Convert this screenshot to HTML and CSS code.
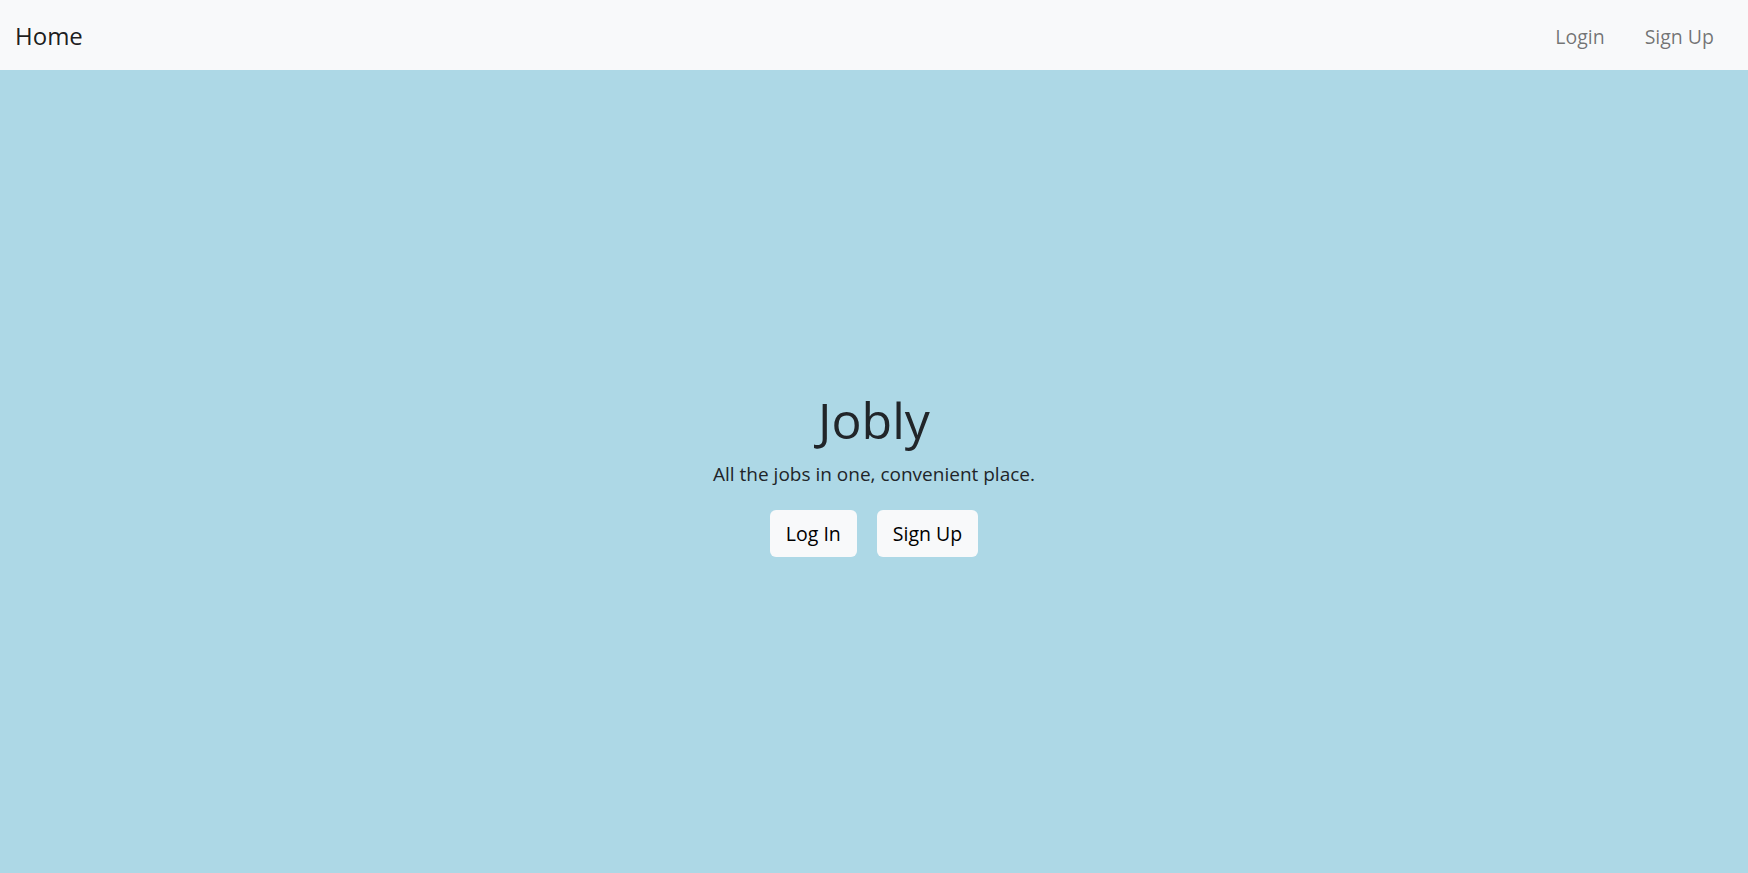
FILE: index.html
```html
<!DOCTYPE html>
<html lang="en">
<head>
<meta charset="utf-8">
<title>Jobly</title>
<link rel="stylesheet" href="styles.css">
</head>
<body>
<div class="app">
  <nav class="navbar">
    <a class="brand" href="#">Home</a>
    <ul class="nav-links">
      <li><a href="#">Login</a></li>
      <li><a href="#">Sign Up</a></li>
    </ul>
  </nav>
  <main class="home">
    <div class="hero">
      <h1 class="title">Jobly</h1>
      <p class="lead">All the jobs in one, convenient place.</p>
      <div class="actions">
        <a class="btn" href="#">Log In</a>
        <a class="btn" href="#">Sign Up</a>
      </div>
    </div>
  </main>
</div>
</body>
</html>
```

FILE: styles.css
```css
* { box-sizing: border-box; }
html, body { margin: 0; padding: 0; height: 100%; }
body {
  font-family: "Open Sans", "Noto Sans", sans-serif;
  color: #212529;
  background: #add8e6;
}
a { text-decoration: none; }
.app { display: flex; flex-direction: column; height: 100%; }
.navbar {
  height: 70px;
  background: #f8f9fa;
  display: flex;
  align-items: center;
  justify-content: space-between;
  padding: 0 24px 0 15px;
  flex: none;
}
.brand { font-size: 24px; color: rgba(0,0,0,0.9); }
.nav-links { list-style: none; margin: 0; padding: 0; display: flex; gap: 20px; }
.nav-links a {
  display: block;
  padding: 11px 10px 9px;
  font-size: 19.5px;
  color: rgba(0,0,0,0.55);
}
.home {
  flex: 1;
  display: flex;
  align-items: center;
  justify-content: center;
  padding-top: 4px;
}
.hero { text-align: center; }
.title { font-size: 50px; font-weight: 400; line-height: 1.2; margin: 0 0 10px; }
.lead { font-size: 19px; line-height: 1.5; margin: 0 0 22px; }
.actions { display: flex; justify-content: center; gap: 20px; }
.btn {
  display: inline-block;
  height: 47px;
  line-height: 47px;
  padding: 0 16px;
  font-size: 19.5px;
  color: #000;
  background: #f8f9fa;
  border-radius: 6px;
}
```
